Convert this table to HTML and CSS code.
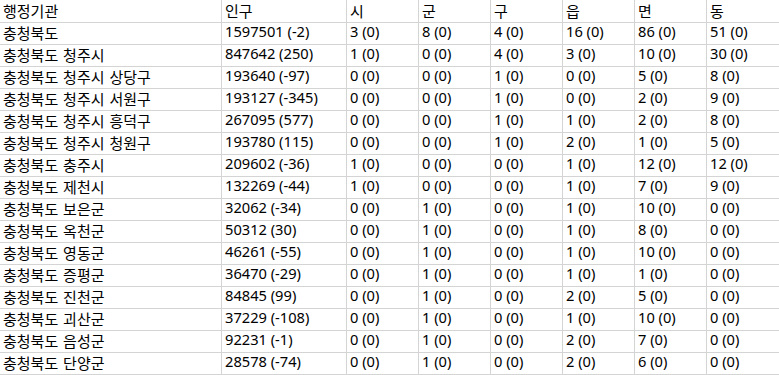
FILE: index.html
```html
<!DOCTYPE html>
<html lang="ko">
<head>
<meta charset="utf-8">
<title>충청북도 행정기관</title>
<link rel="stylesheet" href="styles.css">
</head>
<body>
<div class="table">
  <div class="row head"><div class="c k">행정기관</div><div class="c k">인구</div><div class="c k">시</div><div class="c k">군</div><div class="c k">구</div><div class="c k">읍</div><div class="c k">면</div><div class="c k">동</div></div>
  <div class="row"><div class="c k">충청북도</div><div class="c">1597501 (-2)</div><div class="c">3 (0)</div><div class="c">8 (0)</div><div class="c">4 (0)</div><div class="c">16 (0)</div><div class="c">86 (0)</div><div class="c">51 (0)</div></div>
  <div class="row"><div class="c k">충청북도 청주시</div><div class="c">847642 (250)</div><div class="c">1 (0)</div><div class="c">0 (0)</div><div class="c">4 (0)</div><div class="c">3 (0)</div><div class="c">10 (0)</div><div class="c">30 (0)</div></div>
  <div class="row"><div class="c k">충청북도 청주시 상당구</div><div class="c">193640 (-97)</div><div class="c">0 (0)</div><div class="c">0 (0)</div><div class="c">1 (0)</div><div class="c">0 (0)</div><div class="c">5 (0)</div><div class="c">8 (0)</div></div>
  <div class="row"><div class="c k">충청북도 청주시 서원구</div><div class="c">193127 (-345)</div><div class="c">0 (0)</div><div class="c">0 (0)</div><div class="c">1 (0)</div><div class="c">0 (0)</div><div class="c">2 (0)</div><div class="c">9 (0)</div></div>
  <div class="row"><div class="c k">충청북도 청주시 흥덕구</div><div class="c">267095 (577)</div><div class="c">0 (0)</div><div class="c">0 (0)</div><div class="c">1 (0)</div><div class="c">1 (0)</div><div class="c">2 (0)</div><div class="c">8 (0)</div></div>
  <div class="row"><div class="c k">충청북도 청주시 청원구</div><div class="c">193780 (115)</div><div class="c">0 (0)</div><div class="c">0 (0)</div><div class="c">1 (0)</div><div class="c">2 (0)</div><div class="c">1 (0)</div><div class="c">5 (0)</div></div>
  <div class="row"><div class="c k">충청북도 충주시</div><div class="c">209602 (-36)</div><div class="c">1 (0)</div><div class="c">0 (0)</div><div class="c">0 (0)</div><div class="c">1 (0)</div><div class="c">12 (0)</div><div class="c">12 (0)</div></div>
  <div class="row"><div class="c k">충청북도 제천시</div><div class="c">132269 (-44)</div><div class="c">1 (0)</div><div class="c">0 (0)</div><div class="c">0 (0)</div><div class="c">1 (0)</div><div class="c">7 (0)</div><div class="c">9 (0)</div></div>
  <div class="row"><div class="c k">충청북도 보은군</div><div class="c">32062 (-34)</div><div class="c">0 (0)</div><div class="c">1 (0)</div><div class="c">0 (0)</div><div class="c">1 (0)</div><div class="c">10 (0)</div><div class="c">0 (0)</div></div>
  <div class="row"><div class="c k">충청북도 옥천군</div><div class="c">50312 (30)</div><div class="c">0 (0)</div><div class="c">1 (0)</div><div class="c">0 (0)</div><div class="c">1 (0)</div><div class="c">8 (0)</div><div class="c">0 (0)</div></div>
  <div class="row"><div class="c k">충청북도 영동군</div><div class="c">46261 (-55)</div><div class="c">0 (0)</div><div class="c">1 (0)</div><div class="c">0 (0)</div><div class="c">1 (0)</div><div class="c">10 (0)</div><div class="c">0 (0)</div></div>
  <div class="row"><div class="c k">충청북도 증평군</div><div class="c">36470 (-29)</div><div class="c">0 (0)</div><div class="c">1 (0)</div><div class="c">0 (0)</div><div class="c">1 (0)</div><div class="c">1 (0)</div><div class="c">0 (0)</div></div>
  <div class="row"><div class="c k">충청북도 진천군</div><div class="c">84845 (99)</div><div class="c">0 (0)</div><div class="c">1 (0)</div><div class="c">0 (0)</div><div class="c">2 (0)</div><div class="c">5 (0)</div><div class="c">0 (0)</div></div>
  <div class="row"><div class="c k">충청북도 괴산군</div><div class="c">37229 (-108)</div><div class="c">0 (0)</div><div class="c">1 (0)</div><div class="c">0 (0)</div><div class="c">1 (0)</div><div class="c">10 (0)</div><div class="c">0 (0)</div></div>
  <div class="row"><div class="c k">충청북도 음성군</div><div class="c">92231 (-1)</div><div class="c">0 (0)</div><div class="c">1 (0)</div><div class="c">0 (0)</div><div class="c">2 (0)</div><div class="c">7 (0)</div><div class="c">0 (0)</div></div>
  <div class="row"><div class="c k">충청북도 단양군</div><div class="c">28578 (-74)</div><div class="c">0 (0)</div><div class="c">1 (0)</div><div class="c">0 (0)</div><div class="c">2 (0)</div><div class="c">6 (0)</div><div class="c">0 (0)</div></div>
</div>
</body>
</html>
```

FILE: styles.css
```css
html, body {
  margin: 0;
  padding: 0;
  background: #ffffff;
}
body {
  width: 779px;
  height: 375px;
  overflow: hidden;
  font-family: "Noto Sans", "Noto Sans CJK KR", sans-serif;
  font-size: 14.67px;
  color: #000000;
}
.table {
  display: flex;
  flex-direction: column;
  width: 779px;
}
.row {
  display: grid;
  grid-template-columns: 221px 124px 71px 71px 71px 71px 71px 72px;
  column-gap: 1px;
  background: #d4d4d4;
  border-bottom: 1px solid #d4d4d4;
}
.c {
  background: #ffffff;
  box-sizing: border-box;
  height: 21px;
  line-height: 17px;
  padding-left: 3px;
  white-space: nowrap;
}
.k {
  font-size: 15px;
  line-height: 20px;
  word-spacing: 1px;
}
.head .c {
  height: 22px;
  padding-top: 1px;
}
```
